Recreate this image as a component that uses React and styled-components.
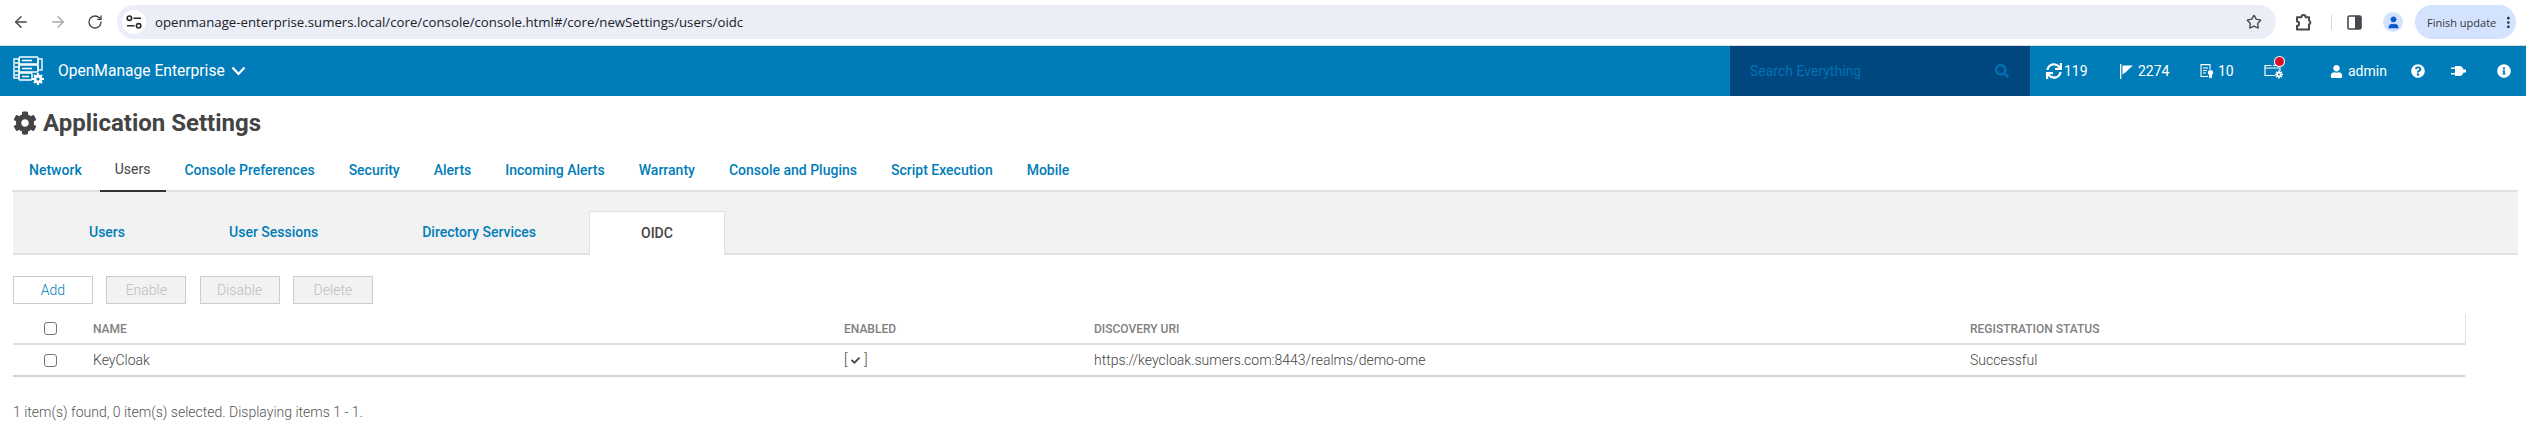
import React from "react";
import styled, { createGlobalStyle } from "styled-components";
import { FaCog, FaSync, FaSearch, FaQuestionCircle, FaInfoCircle, FaUser, FaCheck } from "react-icons/fa";
import { ArrowLeft, ArrowRight, RotateCw, Star, EllipsisVertical, User } from "lucide-react";

const Global = createGlobalStyle`
  html, body { margin: 0; padding: 0; background: #fff; overflow: hidden; }
  body { font-family: Roboto, "Liberation Sans", sans-serif; }
  * { box-sizing: border-box; }
`;

const Page = styled.div`width: 2526px; height: 440px; display: flex; flex-direction: column; overflow: hidden;`;

const Browser = styled.div`
  height: 46px; display: flex; align-items: center; padding: 0 10px 1px 0; background: #fff; border-bottom: 1px solid #d8dbe0; flex: none;
`;
const ChromeBtn = styled.div`
  width: ${p => p.$w || 37}px; display: flex; justify-content: center; align-items: center; color: ${p => p.$dim ? "#a8abaf" : "#45484d"}; flex: none;
`;
const BackGroup = styled.div`display: flex; padding-left: 2px; width: 118px;`;
const Omni = styled.div`
  width: 2159px; height: 34px; border-radius: 17px; background: #ebeef7; display: flex; align-items: center; padding: 0 14px 0 5px; flex: none;
`;
const Tune = styled.div`
  width: 24px; height: 24px; border-radius: 50%; background: #fff; display: flex; align-items: center; justify-content: center; color: #26282c; flex: none;
`;
const Url = styled.span`
  margin-left: 9px; font: 400 13.24px "Open Sans", sans-serif; color: #202227; flex: 1; white-space: nowrap;
`;
const Tools = styled.div`display: flex; align-items: center; margin-left: 9px; flex: 1;`;
const Sep = styled.div`width: 1px; height: 15px; background: #c9d8f0; margin: 0 10px;`;
const Avatar = styled.div`
  width: 20px; height: 20px; border-radius: 50%; background: #d3e3fd; color: #0b57d0; display: flex; align-items: center; justify-content: center; margin: 0 12px 0 17px; overflow: hidden;
`;
const Pill = styled.div`
  width: 101px; height: 34px; border-radius: 17px; background: #d3e3fd; display: flex; align-items: center; padding-left: 12px; color: #34383f; font: 400 11px "Open Sans", sans-serif; white-space: nowrap; gap: 1px;
`;

const Nav = styled.div`height: 50px; background: #007db8; display: flex; align-items: center; flex: none; color: #fff;`;
const Logo = styled.div`margin-left: 13px; width: 32px; height: 30px; display: flex; flex: none;`;
const Brand = styled.div`margin-left: 13px; font-size: 15.6px; font-weight: 400; display: flex; align-items: center; gap: 6px; white-space: nowrap;`;
const Spacer = styled.div`flex: 1;`;
const SearchBox = styled.div`
  width: 300px; height: 50px; background: #00467f; display: flex; align-items: center; justify-content: space-between; padding: 0 21px 0 20px; color: #0073b1; font-size: 14px; flex: none; margin-right: 16px;
`;
const NavItem = styled.div`
  width: ${p => p.$w}px; display: flex; align-items: center; gap: ${p => p.$gap ?? 4}px; font-size: 14px; flex: none; position: relative; white-space: nowrap;
`;
const Dot = styled.span`
  position: absolute; left: 11px; top: -6px; width: 9px; height: 9px; border-radius: 50%; background: #d8102c; box-shadow: 0 0 0 1px #fff;
`;

const Main = styled.div`flex: 1; display: flex; flex-direction: column; padding: 0 8px 0 13px;`;
const Title = styled.h1`
  margin: 0; height: 54px; padding-bottom: 1px; display: flex; align-items: center; gap: 6px; font-size: 24px; font-weight: 700; color: #444; flex: none; white-space: nowrap;
`;
const PrimaryTabs = styled.div`display: flex; height: 42px; border-bottom: 2px solid #e0e0e0; flex: none; margin-left: -1px;`;
const PrimaryTab = styled.div`
  padding: ${p => p.$active ? "0 16px 0 15px" : "0 17px"}; height: 42px; line-height: ${p => p.$active ? 38 : 40}px; font-size: 14px;
  font-weight: ${p => p.$active ? 400 : 500}; color: ${p => p.$active ? "#444" : "#007db8"};
  border-bottom: 2px solid ${p => p.$active ? "#333" : "transparent"}; white-space: nowrap;
  margin: 0 ${p => p.$active ? 1 : 0}px;
`;
const SubBar = styled.div`
  height: 63px; background: #f2f2f2; border-bottom: 2px solid #e0e0e0; display: flex; align-items: flex-end; padding-left: 24px; flex: none;
`;
const SubTab = styled.div`
  padding: 0 ${p => p.$active ? 51 : 52}px; height: 44px; line-height: 42px; font-size: 14px; font-weight: 500; margin-bottom: -2px; white-space: nowrap;
  color: ${p => p.$active ? "#444" : "#007db8"};
  background: ${p => p.$active ? "#fff" : "transparent"};
  border: ${p => p.$active ? "1px solid #e0e0e0" : "none"};
  border-bottom: none;
  margin-left: ${p => p.$active ? 1 : 0}px;
`;
const Actions = styled.div`display: flex; gap: 13.3px; margin-top: 21px; flex: none;`;
const Btn = styled.button`
  width: 80px; height: 28px; padding: 0; font: 300 14px Roboto, sans-serif; border: 1px solid #ccc;
  background: ${p => p.disabled ? "#f2f2f2" : "#fff"}; color: ${p => p.disabled ? "#bdbdbd" : "#007db8"};
`;
const Table = styled.table`
  width: 2452px; margin-top: 10px; border-collapse: collapse; table-layout: fixed; flex: none;
`;
const Th = styled.th`
  height: 30px; padding: 0; text-align: left; font-size: 12px; font-weight: 500; color: #808080; border-bottom: 2px solid #e0e0e0; border-right: ${p => p.$last ? "1px solid #e0e0e0" : "none"};
`;
const Td = styled.td`
  height: 32px; padding: 0; font-size: 14px; font-weight: 300; color: #444; border-bottom: 2px solid #d4d4d4; white-space: nowrap;
`;
const CheckCell = styled.div`display: flex; justify-content: flex-end; padding-right: 36px;`;
const Check = styled.span`
  display: block; width: 13px; height: 13px; border: 1px solid #767676; border-radius: 3px; background: #fff;
`;
const Enabled = styled.span`display: inline-flex; align-items: center; gap: 4px; font-size: 14px;`;
const Footer = styled.div`margin-top: 27px; font-size: 14px; font-weight: 300; color: #555; white-space: nowrap;`;

const TuneIcon = () => (
  <svg width="16" height="14" viewBox="0 0 16 14" fill="none" stroke="#26282c" strokeWidth="1.6">
    <circle cx="3.4" cy="3.2" r="2.2" /><path d="M7.5 3.2H15M1 10.8h7.5" /><circle cx="12.6" cy="10.8" r="2.2" />
  </svg>
);
const ExtensionIcon = () => (
  <svg width="18" height="18" viewBox="0 0 18 18" fill="none" stroke="#45484d" strokeWidth="2" strokeLinejoin="round">
    <path d="M5 4.2h2.4a2.1 2.1 0 0 1 4.2 0H15v3.4a2 2 0 0 1 0 3.8v5H3v-3.6a2.1 2.1 0 0 0 0-4.2V4.2z" />
  </svg>
);
const SidePanelIcon = () => (
  <svg width="15" height="15" viewBox="0 0 15 15">
    <rect x="1" y="1" width="13" height="13" rx="1.5" fill="#fff" stroke="#45484d" strokeWidth="1.6" />
    <path d="M8 1h5a1 1 0 0 1 1 1v11a1 1 0 0 1-1 1H8z" fill="#45484d" />
  </svg>
);
const LogoIcon = () => (
  <svg width="32" height="30" viewBox="0 0 32 30" fill="none" stroke="#fff" strokeWidth="1.4">
    <rect x="6" y="1" width="19" height="7" rx="1" />
    <rect x="1" y="3" width="5" height="19" />
    <rect x="6" y="9" width="19" height="7" rx="1" />
    <rect x="6" y="17" width="13" height="7" rx="1" />
    <rect x="25" y="3" width="4" height="11" />
    <path d="M9 4.5h10M9 12.5h10M9 20.5h7M2 7h3M2 11h3M2 15h3M2 19h3" />
    <circle cx="25" cy="23" r="4.2" fill="#fff" stroke="none" />
    <path d="M25 17v12M19 23h12M21 19l8 8M29 19l-8 8" strokeWidth="2.2" />
    <circle cx="25" cy="23" r="1.6" fill="#007db8" stroke="none" />
  </svg>
);
const Chevron = () => (
  <svg width="15" height="10" viewBox="0 0 15 10" fill="none" stroke="#fff" strokeWidth="2.2"><path d="M1.5 1.5 7.5 8l6-6.5" /></svg>
);
const FlagIcon = () => (
  <svg width="13" height="15" viewBox="0 0 13 15" fill="#fff"><rect x="0" y="0" width="1.3" height="15" /><path d="M2.5 1.5H13L9.5 4.5 6 8 2.5 10.5z" /></svg>
);
const CertIcon = () => (
  <svg width="14" height="15" viewBox="0 0 14 15" fill="none" stroke="#fff" strokeWidth="1.1">
    <path d="M8 12.5H1V.6h9v5" /><path d="M3 4h5M3 6.5h4M3 9h3" />
    <circle cx="10.5" cy="8.6" r="2.6" fill="#fff" stroke="none" />
    <path d="M9 11v3.5l1.5-1 1.5 1V11" fill="#fff" stroke="none" />
  </svg>
);
const FolderGear = () => (
  <svg width="21" height="16" viewBox="0 0 21 16" fill="none" stroke="#fff" strokeWidth="1.2">
    <path d="M11 12.5H1V2.5h6.5M9 2.5h4.5M1 5h15v3" />
    <circle cx="15" cy="11.5" r="2.5" fill="#fff" stroke="none" />
    <path d="M15 7.5v8M11 11.5h8M12.2 8.7l5.6 5.6M17.8 8.7l-5.6 5.6" strokeWidth="1.6" />
    <circle cx="15" cy="11.5" r="1" fill="#007db8" stroke="none" />
  </svg>
);
const PlugIcon = () => (
  <svg width="15" height="12" viewBox="0 0 15 12" fill="#fff">
    <path d="M0 2.5h4v1.5H0zM0 8h4v1.5H0zM4 1h4.5c2.2 0 3.5 1.8 4 3.5H15v3h-2.5c-.5 1.7-1.8 3.5-4 3.5H4z" />
  </svg>
);

const primary = ["Network", "Users", "Console Preferences", "Security", "Alerts", "Incoming Alerts", "Warranty", "Console and Plugins", "Script Execution", "Mobile"];
const secondary = ["Users", "User Sessions", "Directory Services", "OIDC"];
const actions = [["Add", false], ["Enable", true], ["Disable", true], ["Delete", true]];

export default function App() {
  return (
    <Page>
      <Global />
      <Browser>
        <BackGroup>
          <ChromeBtn><ArrowLeft size={18} strokeWidth={2} /></ChromeBtn>
          <ChromeBtn $dim><ArrowRight size={18} strokeWidth={2} /></ChromeBtn>
          <ChromeBtn><RotateCw size={16} strokeWidth={2} /></ChromeBtn>
        </BackGroup>
        <Omni>
          <Tune><TuneIcon /></Tune>
          <Url>openmanage-enterprise.sumers.local/core/console/console.html#/core/newSettings/users/oidc</Url>
          <Star size={16} strokeWidth={2} color="#45484d" />
        </Omni>
        <Tools>
          <ChromeBtn $w={36}><ExtensionIcon /></ChromeBtn>
          <Sep />
          <ChromeBtn $w={24}><SidePanelIcon /></ChromeBtn>
          <Avatar><User size={15} fill="#0b57d0" strokeWidth={1.5} /></Avatar>
          <Pill>Finish update<EllipsisVertical size={17} strokeWidth={2.4} color="#1f2a44" style={{ marginLeft: 4 }} /></Pill>
        </Tools>
      </Browser>
      <Nav>
        <Logo><LogoIcon /></Logo>
        <Brand>OpenManage Enterprise <Chevron /></Brand>
        <Spacer />
        <SearchBox>Search Everything <FaSearch size={14} /></SearchBox>
        <NavItem $w={74} $gap={2}><FaSync size={16} />119</NavItem>
        <NavItem $w={80} $gap={5}><FlagIcon />2274</NavItem>
        <NavItem $w={64}><CertIcon />10</NavItem>
        <NavItem $w={66}><FolderGear /><Dot /></NavItem>
        <NavItem $w={81} $gap={5}><FaUser size={13} />admin</NavItem>
        <NavItem $w={40}><FaQuestionCircle size={14} /></NavItem>
        <NavItem $w={46}><PlugIcon /></NavItem>
        <NavItem $w={29}><FaInfoCircle size={14} /></NavItem>
      </Nav>
      <Main>
        <Title><FaCog size={24} />Application Settings</Title>
        <PrimaryTabs>
          {primary.map(t => <PrimaryTab key={t} $active={t === "Users"}>{t}</PrimaryTab>)}
        </PrimaryTabs>
        <SubBar>
          {secondary.map(t => <SubTab key={t} $active={t === "OIDC"}>{t}</SubTab>)}
        </SubBar>
        <Actions>
          {actions.map(([t, d]) => <Btn key={t} disabled={d}>{t}</Btn>)}
        </Actions>
        <Table>
          <colgroup>
            <col width="80" /><col width="751" /><col width="250" /><col width="876" /><col width="495" />
          </colgroup>
          <thead>
            <tr>
              <Th><CheckCell><Check /></CheckCell></Th>
              <Th>NAME</Th>
              <Th>ENABLED</Th>
              <Th>DISCOVERY URI</Th>
              <Th $last>REGISTRATION STATUS</Th>
            </tr>
          </thead>
          <tbody>
            <tr>
              <Td><CheckCell><Check /></CheckCell></Td>
              <Td>KeyCloak</Td>
              <Td><Enabled>[<FaCheck size={9} />]</Enabled></Td>
              <Td>https://keycloak.sumers.com:8443/realms/demo-ome</Td>
              <Td>Successful</Td>
            </tr>
          </tbody>
        </Table>
        <Footer>1 item(s) found, 0 item(s) selected. Displaying items 1 - 1.</Footer>
      </Main>
    </Page>
  );
}
